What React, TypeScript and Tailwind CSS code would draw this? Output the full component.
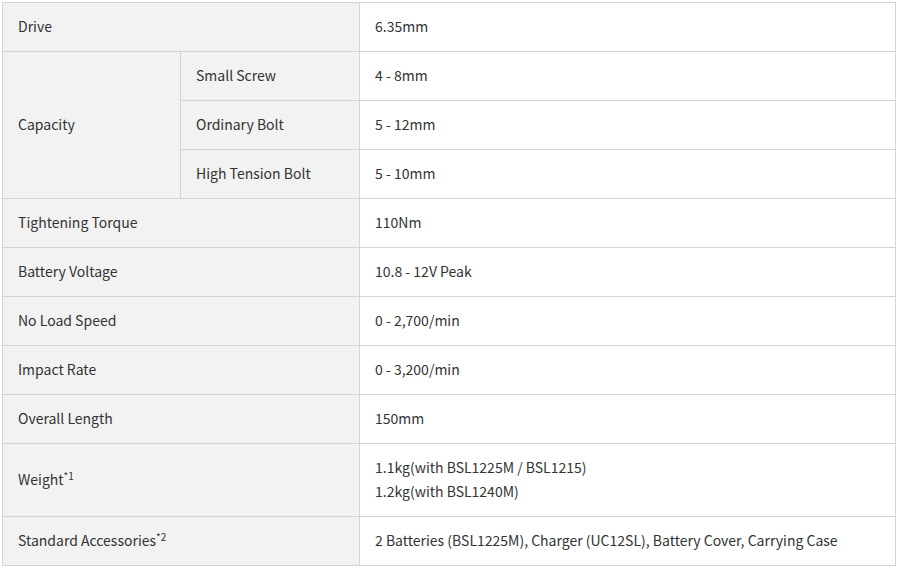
const rows: { label: React.ReactNode; value: React.ReactNode; tall?: boolean }[] = [
  { label: "Tightening Torque", value: "110Nm" },
  { label: "Battery Voltage", value: "10.8 - 12V Peak" },
  { label: "No Load Speed", value: "0 - 2,700/min" },
  { label: "Impact Rate", value: "0 - 3,200/min" },
  { label: "Overall Length", value: "150mm" },
  {
    label: (
      <>
        Weight<sup className="relative -top-[5px] text-[10px]">*1</sup>
      </>
    ),
    value: (
      <>
        1.1kg(with BSL1225M / BSL1215)
        <br />
        1.2kg(with BSL1240M)
      </>
    ),
    tall: true,
  },
  {
    label: (
      <>
        Standard Accessories<sup className="relative -top-[5px] text-[10px]">*2</sup>
      </>
    ),
    value: "2 Batteries (BSL1225M), Charger (UC12SL), Battery Cover, Carrying Case",
  },
];

const capacity = [
  { label: "Small Screw", value: "4 - 8mm" },
  { label: "Ordinary Bolt", value: "5 - 12mm" },
  { label: "High Tension Bolt", value: "5 - 10mm" },
];

const th = "border border-[#d4d4d4] bg-[#f2f2f2] px-[15px] pb-[2px] text-left align-middle font-normal";
const td = "border border-[#d4d4d4] bg-white px-[15px] pb-[2px] text-left align-middle";

export default function App() {
  return (
    <div
      className="min-h-[570px] bg-white p-[2px] text-[14px] leading-[24px] text-[#333]"
      style={{ fontFamily: '"Noto Sans CJK KR", "Noto Sans", sans-serif' }}
    >
      <table className="w-[894px] table-fixed border-collapse">
        <colgroup>
          <col className="w-[178px]" />
          <col className="w-[179px]" />
          <col />
        </colgroup>
        <tbody>
          <tr className="h-[49px]">
            <th colSpan={2} className={th}>
              Drive
            </th>
            <td className={td}>6.35mm</td>
          </tr>
          {capacity.map((c, i) => (
            <tr key={c.label} className="h-[49px]">
              {i === 0 && (
                <th rowSpan={3} className={th}>
                  Capacity
                </th>
              )}
              <th className={th}>{c.label}</th>
              <td className={td}>{c.value}</td>
            </tr>
          ))}
          {rows.map((r, i) => (
            <tr key={i} className={r.tall ? "h-[73px]" : "h-[49px]"}>
              <th colSpan={2} className={th}>
                {r.label}
              </th>
              <td className={td}>{r.value}</td>
            </tr>
          ))}
        </tbody>
      </table>
    </div>
  );
}
